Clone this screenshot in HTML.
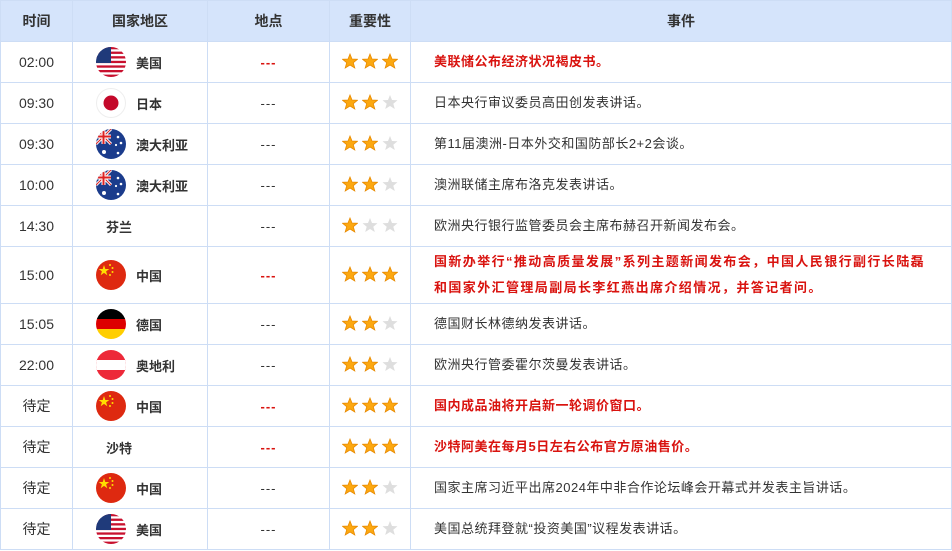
<!DOCTYPE html>
<html><head><meta charset="utf-8"><style>
body{margin:0;background:#fff;font-family:"Liberation Sans","Noto Sans CJK SC",sans-serif;color:#333;width:952px;height:551px;overflow:hidden;position:relative}
.r{position:absolute;left:0;width:952px;display:flex;border-bottom:1px solid #cdddf5;box-sizing:border-box}
.r>div{border-left:1px solid #cdddf5;box-sizing:border-box;display:flex;align-items:center;justify-content:center;font-size:14px;height:100%}
.r>div:last-child{border-right:1px solid #cdddf5}
.w1{width:72px}.w2{width:135px;justify-content:flex-start!important}.w3{width:122px}.w4{width:81px}.w5{flex:1;justify-content:flex-start!important;padding-left:23px}
.h{background:#d5e4fb;font-weight:bold;border-top:1px solid #cdddf5}
.h>div{justify-content:center!important;padding-left:0!important}
.ev{font-size:13px!important;line-height:26px;letter-spacing:0.5px}
.red{color:#d9130f;font-weight:bold}
.c svg{width:30px;height:30px;margin:0 10px 0 23px;flex:none;display:block}
.c span{font-weight:bold;font-size:13px}
.nf span{margin-left:33px}
.dash{font-size:13px!important;letter-spacing:1px}
.rd{color:#d9130f;font-weight:bold}
.st{padding-bottom:2px}
.st svg{display:block;margin:0 2px}
</style></head><body>
<svg width="0" height="0" style="position:absolute"><defs>
<symbol id="so" viewBox="0 0 16 16"><polygon points="8,1 10,6 15.5,6.3 11.3,9.7 12.8,15 8,12 3.2,15 4.7,9.7 0.5,6.3 6,6" fill="#fca810" stroke="#e88a00" stroke-width="0.8"/></symbol>
<symbol id="sg" viewBox="0 0 16 16"><polygon points="8,1 10,6 15.5,6.3 11.3,9.7 12.8,15 8,12 3.2,15 4.7,9.7 0.5,6.3 6,6" fill="#dedede"/></symbol>
<symbol id="us" viewBox="0 0 30 30"><clipPath id="cc"><circle cx="15" cy="15" r="15"/></clipPath><g clip-path="url(#cc)"><rect width="30" height="30" fill="#fff"/><g fill="#c8102e"><rect y="0" width="30" height="2.3"/><rect y="4.6" width="30" height="2.3"/><rect y="9.2" width="30" height="2.3"/><rect y="13.8" width="30" height="2.3"/><rect y="18.4" width="30" height="2.3"/><rect y="23" width="30" height="2.3"/><rect y="27.6" width="30" height="2.4"/></g><rect width="15" height="16" fill="#1f3a7a"/></g></symbol>
<symbol id="jp" viewBox="0 0 30 30"><circle cx="15" cy="15" r="14.5" fill="#fff" stroke="#eee"/><circle cx="15" cy="15" r="7.5" fill="#c4082a"/></symbol>
<symbol id="au" viewBox="0 0 30 30"><circle cx="15" cy="15" r="15" fill="#1b3c8c"/><clipPath id="ca"><circle cx="15" cy="15" r="15"/></clipPath><g clip-path="url(#ca)"><path d="M0 0L15 15M15 0L0 15" stroke="#fff" stroke-width="3"/><path d="M0 0L15 15M15 0L0 15" stroke="#d22" stroke-width="1"/><path d="M7.5 0V15M0 7.5H15" stroke="#fff" stroke-width="4"/><path d="M7.5 0V15M0 7.5H15" stroke="#d22" stroke-width="2"/></g><g fill="#fff"><circle cx="8" cy="23" r="2"/><circle cx="22" cy="8" r="1.3"/><circle cx="25" cy="14" r="1.3"/><circle cx="20" cy="16" r="1.1"/><circle cx="22" cy="24" r="1.3"/></g></symbol>
<symbol id="cn" viewBox="0 0 30 30"><circle cx="15" cy="15" r="15" fill="#de2910"/><polygon points="8,5 9.3,9 13.3,9 10.1,11.4 11.3,15.3 8,12.9 4.7,15.3 5.9,11.4 2.7,9 6.7,9" fill="#ffde00"/><g fill="#ffde00"><circle cx="14" cy="5" r="1"/><circle cx="16.5" cy="8" r="1"/><circle cx="16.5" cy="12" r="1"/><circle cx="14" cy="15" r="1"/></g></symbol>
<symbol id="de" viewBox="0 0 30 30"><clipPath id="cd"><circle cx="15" cy="15" r="15"/></clipPath><g clip-path="url(#cd)"><rect width="30" height="10" fill="#000"/><rect y="10" width="30" height="10" fill="#dd0000"/><rect y="20" width="30" height="10" fill="#ffce00"/></g></symbol>
<symbol id="at" viewBox="0 0 30 30"><clipPath id="ct"><circle cx="15" cy="15" r="15"/></clipPath><g clip-path="url(#ct)"><rect width="30" height="30" fill="#ed2939"/><rect y="10" width="30" height="10" fill="#fff"/></g></symbol>
</defs></svg>

<div class="r h" style="top:0;height:42px"><div class="w1">时间</div><div class="w2">国家地区</div><div class="w3">地点</div><div class="w4">重要性</div><div class="w5">事件</div></div>

<div class="r" style="top:42px;height:41px"><div class="w1">02:00</div><div class="w2 c"><svg><use href="#us"/></svg><span>美国</span></div><div class="w3 dash rd">---</div><div class="w4 st"><svg width="16" height="16"><use href="#so"/></svg><svg width="16" height="16"><use href="#so"/></svg><svg width="16" height="16"><use href="#so"/></svg></div><div class="w5 ev red">美联储公布经济状况褐皮书。</div></div>

<div class="r" style="top:83px;height:41px"><div class="w1">09:30</div><div class="w2 c"><svg><use href="#jp"/></svg><span>日本</span></div><div class="w3 dash">---</div><div class="w4 st"><svg width="16" height="16"><use href="#so"/></svg><svg width="16" height="16"><use href="#so"/></svg><svg width="16" height="16"><use href="#sg"/></svg></div><div class="w5 ev">日本央行审议委员高田创发表讲话。</div></div>

<div class="r" style="top:124px;height:41px"><div class="w1">09:30</div><div class="w2 c"><svg><use href="#au"/></svg><span>澳大利亚</span></div><div class="w3 dash">---</div><div class="w4 st"><svg width="16" height="16"><use href="#so"/></svg><svg width="16" height="16"><use href="#so"/></svg><svg width="16" height="16"><use href="#sg"/></svg></div><div class="w5 ev">第11届澳洲-日本外交和国防部长2+2会谈。</div></div>

<div class="r" style="top:165px;height:41px"><div class="w1">10:00</div><div class="w2 c"><svg><use href="#au"/></svg><span>澳大利亚</span></div><div class="w3 dash">---</div><div class="w4 st"><svg width="16" height="16"><use href="#so"/></svg><svg width="16" height="16"><use href="#so"/></svg><svg width="16" height="16"><use href="#sg"/></svg></div><div class="w5 ev">澳洲联储主席布洛克发表讲话。</div></div>

<div class="r" style="top:206px;height:41px"><div class="w1">14:30</div><div class="w2 c nf"><span>芬兰</span></div><div class="w3 dash">---</div><div class="w4 st"><svg width="16" height="16"><use href="#so"/></svg><svg width="16" height="16"><use href="#sg"/></svg><svg width="16" height="16"><use href="#sg"/></svg></div><div class="w5 ev">欧洲央行银行监管委员会主席布赫召开新闻发布会。</div></div>

<div class="r" style="top:247px;height:57px"><div class="w1">15:00</div><div class="w2 c"><svg><use href="#cn"/></svg><span>中国</span></div><div class="w3 dash rd">---</div><div class="w4 st"><svg width="16" height="16"><use href="#so"/></svg><svg width="16" height="16"><use href="#so"/></svg><svg width="16" height="16"><use href="#so"/></svg></div><div class="w5 ev red" style="letter-spacing:1.4px">国新办举行“推动高质量发展”系列主题新闻发布会，中国人民银行副行长陆磊<br>和国家外汇管理局副局长李红燕出席介绍情况，并答记者问。</div></div>

<div class="r" style="top:304px;height:41px"><div class="w1">15:05</div><div class="w2 c"><svg><use href="#de"/></svg><span>德国</span></div><div class="w3 dash">---</div><div class="w4 st"><svg width="16" height="16"><use href="#so"/></svg><svg width="16" height="16"><use href="#so"/></svg><svg width="16" height="16"><use href="#sg"/></svg></div><div class="w5 ev">德国财长林德纳发表讲话。</div></div>

<div class="r" style="top:345px;height:41px"><div class="w1">22:00</div><div class="w2 c"><svg><use href="#at"/></svg><span>奥地利</span></div><div class="w3 dash">---</div><div class="w4 st"><svg width="16" height="16"><use href="#so"/></svg><svg width="16" height="16"><use href="#so"/></svg><svg width="16" height="16"><use href="#sg"/></svg></div><div class="w5 ev">欧洲央行管委霍尔茨曼发表讲话。</div></div>

<div class="r" style="top:386px;height:41px"><div class="w1">待定</div><div class="w2 c"><svg><use href="#cn"/></svg><span>中国</span></div><div class="w3 dash rd">---</div><div class="w4 st"><svg width="16" height="16"><use href="#so"/></svg><svg width="16" height="16"><use href="#so"/></svg><svg width="16" height="16"><use href="#so"/></svg></div><div class="w5 ev red">国内成品油将开启新一轮调价窗口。</div></div>

<div class="r" style="top:427px;height:41px"><div class="w1">待定</div><div class="w2 c nf"><span>沙特</span></div><div class="w3 dash rd">---</div><div class="w4 st"><svg width="16" height="16"><use href="#so"/></svg><svg width="16" height="16"><use href="#so"/></svg><svg width="16" height="16"><use href="#so"/></svg></div><div class="w5 ev red">沙特阿美在每月5日左右公布官方原油售价。</div></div>

<div class="r" style="top:468px;height:41px"><div class="w1">待定</div><div class="w2 c"><svg><use href="#cn"/></svg><span>中国</span></div><div class="w3 dash">---</div><div class="w4 st"><svg width="16" height="16"><use href="#so"/></svg><svg width="16" height="16"><use href="#so"/></svg><svg width="16" height="16"><use href="#sg"/></svg></div><div class="w5 ev">国家主席习近平出席2024年中非合作论坛峰会开幕式并发表主旨讲话。</div></div>

<div class="r" style="top:509px;height:41px"><div class="w1">待定</div><div class="w2 c"><svg><use href="#us"/></svg><span>美国</span></div><div class="w3 dash">---</div><div class="w4 st"><svg width="16" height="16"><use href="#so"/></svg><svg width="16" height="16"><use href="#so"/></svg><svg width="16" height="16"><use href="#sg"/></svg></div><div class="w5 ev">美国总统拜登就“投资美国”议程发表讲话。</div></div>
</body></html>
